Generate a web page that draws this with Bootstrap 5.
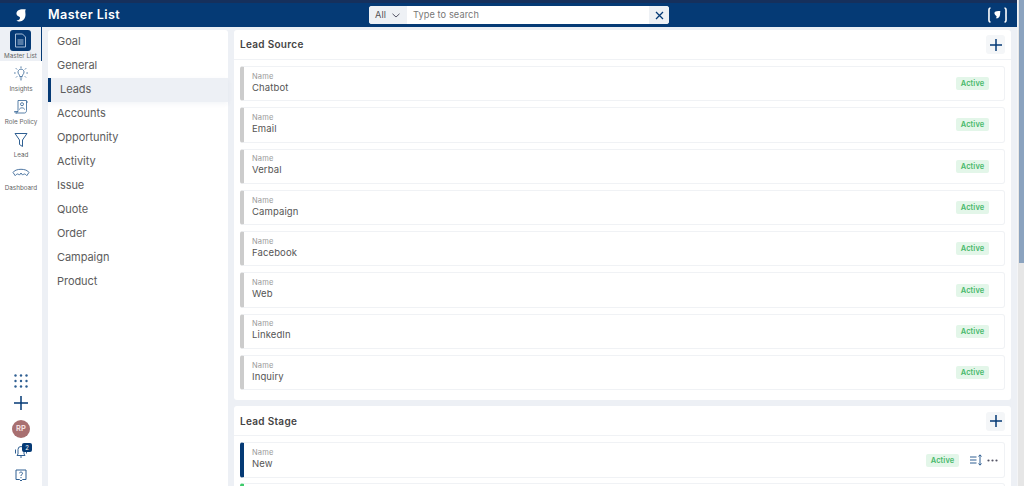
<!doctype html>
<html lang="en"><head><meta charset="utf-8"><title>Master List</title>
<link href="https://cdn.jsdelivr.net/npm/bootstrap@5.3.0/dist/css/bootstrap.min.css" rel="stylesheet">
<style>
html,body{height:486px;overflow:hidden}
body{background:#edf0f5;font-family:Inter,"Noto Sans",sans-serif;color:#444}
.page-col{width:1017px;flex:none;height:486px;overflow:hidden}
.topbar{height:27px;background:#053a75;border-top:3px solid #16305c;color:#fff}
.logo-cell{width:42px}
.page-title{width:327px;padding-left:6px;font-size:12.6px;font-weight:600;letter-spacing:.42px}
.search-box{width:300px;height:18px;background:#fff;border-radius:3px;overflow:hidden;font-size:9.2px;letter-spacing:.1px}
.search-all{width:38px;background:#eef1f5;color:#555;padding-left:6px;gap:6px}
.search-text{color:#777;padding-left:6px}
.search-x{width:20px;background:#eef1f5}
.brand-cell{margin-left:auto;margin-right:9px}
.main-area{height:459px}
.rail{width:42px;background:#fff;flex:none;font-size:6.3px;color:#666}
.rail-item{height:33px;padding-top:5px;gap:3px}
.rail-item span{line-height:8px;white-space:nowrap}
.rail-active{height:34px;background:#edf0f5;border-right:1px solid #053a75;padding-top:3px}
.rail-active span{line-height:8px}
.rail-tile{width:21px;height:21px;background:#053a75;border-radius:3px;margin-bottom:1px}
.rail-bottom{margin-top:auto;padding-bottom:4px}
.gap-dots{margin-bottom:8px}
.gap-plus{margin-bottom:10px}
.gap-avatar{margin-bottom:8px}
.gap-bell{margin-bottom:11px}
.avatar{width:18px;height:18px;border-radius:50%;background:#a86f70;color:#f3dede;font-size:7.5px;font-weight:700}
.count-badge{position:absolute;top:-3px;right:-4px;width:10px;height:9px;background:#053a75;color:#fff;border-radius:2px;font-size:6px;line-height:9px;text-align:center}
.menu-panel{width:180px;flex:none;margin:3px 6px 0;background:#fff;border-radius:3px 3px 0 0;font-size:11px;letter-spacing:-.05px;color:#5c5c5c}
.menu-entry{height:24px;padding-left:9px;padding-bottom:1px;display:flex;align-items:center}
.menu-current{background:#edf0f5;border-left:3px solid #053a75;padding-left:9px;box-shadow:0 2px 5px rgba(5,58,117,.05)}
.content-col{width:777px;flex:none;padding-top:3px}
.section-panel{background:#fff;border-radius:3px;margin-bottom:6px}
.section-head{height:30px;padding:0 6px;border-bottom:1px solid #f0f2f5;font-size:10px;font-weight:600;letter-spacing:.3px;color:#444}
.stage-head{padding-top:1px}
.plus-btn{width:19px;height:19px;background:#f4f6f8;border-radius:3px}
.section-body{padding:6px 6px 4px}
.row-card{height:35.3px;margin-bottom:6px;border:1px solid #f0f2f5;border-radius:3px;border-left:4px solid #ccc;padding:0 15px 0 8px}
.row-navy{border-left-color:#053a75;padding-right:6px;margin-bottom:5px}
.row-green{border-left-color:#3ecb6b}
.field-text{padding-bottom:2px}
.field-label{font-size:7.5px;color:#999;line-height:10px;letter-spacing:.2px}
.field-value{font-size:9.5px;color:#555;line-height:12px;letter-spacing:.12px}
.state-pill{width:33px;height:13px;background:#e3f6e9;border-radius:2px;color:#49b96c;font-size:7.5px;font-weight:600;line-height:13px;text-align:center;letter-spacing:.1px}
.row-tools{gap:5px;margin-left:11px}
.scrollbar-col{width:7px;flex:none;background:#e6e6e6;padding-left:1px;border-left:1px solid #f4f5f7}
.scrollbar-thumb{width:5px;height:263px;background:#8ba3bf}
</style></head>
<body class="d-flex">
<div class="page-col">
<nav class="topbar d-flex align-items-center">
  <div class="logo-cell d-flex justify-content-center">
    <svg width="12" height="13" viewBox="0 0 12 13"><path fill="#fff" d="M3 1.500C5 .3 8 0 11 .6 9.700 1.400 10.500 3 10.500 5.500 10.500 9.500 8 12.500 4.500 12.500 3.300 12.500 2.200 12.200 1.500 11.500 3.500 11.500 5 10.500 5 8.700 5 7.500 3 7.500 2 6.300.9 4.800 1.500 2.700 3 1.500Z"/></svg>
  </div>
  <div class="page-title">Master List</div>
  <div class="search-box d-flex align-items-stretch">
    <div class="search-all d-flex align-items-center">All
      <svg width="8" height="5" viewBox="0 0 8 5"><path d="M.5.8 4 4 7.500.8" fill="none" stroke="#556" stroke-width="1"/></svg>
    </div>
    <div class="search-text flex-grow-1 d-flex align-items-center">Type to search</div>
    <div class="search-x d-flex align-items-center justify-content-center">
      <svg width="9" height="9" viewBox="0 0 9 9"><path d="M1 1 8 8M8 1 1 8" stroke="#053a75" stroke-width="1.300"/></svg>
    </div>
  </div>
  <div class="brand-cell d-flex align-items-center">
    <svg width="21" height="16" viewBox="0 0 21 16"><path d="M3.500 1C1.500 1 2 3 2 8S1.500 15 3.500 15M17.500 1C19.500 1 19 3 19 8S19.500 15 17.500 15" fill="none" stroke="#fff" stroke-width="1.600"/><path fill="#fff" d="M8 4.800C9.500 4 11.500 3.800 13.500 4.200 13 5.200 13.200 6.500 13 8 12.600 10.500 11 11.500 8.800 11.300 9.800 10.500 10 9.500 9 8.800 7.500 7.800 6.800 6 8 4.800Z"/></svg>
  </div>
</nav>
<div class="main-area d-flex">
  <aside class="rail d-flex flex-column">
    <div class="rail-active d-flex flex-column align-items-center">
      <div class="rail-tile d-flex align-items-center justify-content-center">
        <svg width="13" height="15" viewBox="0 0 13 15" fill="none" stroke="#b9cce2" stroke-width=".9"><path d="M1.500 1h7l3 3v10h-10z"/><path d="M3.500 7h6M3.500 9h6M3.500 11h6"/></svg>
      </div>
      <span>Master List</span>
    </div>
    <div class="rail-item d-flex flex-column align-items-center">
      <svg width="16" height="16" viewBox="0 0 16 16" fill="none" stroke="#2f5f92" stroke-width=".8"><path d="M5.200 7.200a3 3 0 1 1 5.600 0c-.4.9-1.300 1.500-1.500 3.300H6.700c-.2-1.800-1.100-2.400-1.500-3.300zM6.800 12h2.400M7.200 13.800h1.600M8 .4v1.700M2.800 2.200 4.100 3.500M13.200 2.200 11.900 3.500M1 7h1.700M13.300 7H15M3 11.500l1.200-1.200M13 11.500l-1.200-1.200"/></svg>
      <span>Insights</span>
    </div>
    <div class="rail-item d-flex flex-column align-items-center">
      <svg width="16" height="16" viewBox="0 0 16 16" fill="none" stroke="#2f5f92" stroke-width=".8"><path d="M5 1.500h8.500v10c0 1.500-1 2.500-2 2.500H3c1 0 2-1 2-2.500zM3 14c-1 0-1.500-.7-1.500-1.500h3.500M13.500 3H15"/><circle cx="9" cy="5.200" r="1.500"/><path d="M6.500 10.500c0-2.200 5-2.200 5 0"/></svg>
      <span>Role Policy</span>
    </div>
    <div class="rail-item d-flex flex-column align-items-center">
      <svg width="14" height="16" viewBox="0 0 14 15" fill="none" stroke="#2f5f92" stroke-width="1"><path d="M1 1h12L8.500 7.500v6.500l-3-2V7.500z"/></svg>
      <span>Lead</span>
    </div>
    <div class="rail-item d-flex flex-column align-items-center">
      <svg width="18" height="16" viewBox="0 0 17 14" fill="none" stroke="#2f5f92" stroke-width=".8"><path d="M1 6.500C3 2.500 14 2.500 16 6.500L14 9.500C12.500 7.500 11 7.500 10 9L8.500 7 7 9C6 7.500 4.500 7.500 3 9.500Z"/></svg>
      <span>Dashboard</span>
    </div>
    <div class="rail-bottom d-flex flex-column align-items-center">
      <svg width="14" height="14" viewBox="0 0 14 14" fill="#2f5f92" class="gap-dots"><circle cx="1.500" cy="1.500" r="1.200"/><circle cx="7" cy="1.500" r="1.200"/><circle cx="12.500" cy="1.500" r="1.200"/><circle cx="1.500" cy="7" r="1.200"/><circle cx="7" cy="7" r="1.200"/><circle cx="12.500" cy="7" r="1.200"/><circle cx="1.500" cy="12.500" r="1.200"/><circle cx="7" cy="12.500" r="1.200"/><circle cx="12.500" cy="12.500" r="1.200"/></svg>
      <svg width="14" height="14" viewBox="0 0 14 14" class="gap-plus"><path d="M7 0v14M0 7h14" stroke="#053a75" stroke-width="1.500"/></svg>
      <div class="avatar d-flex align-items-center justify-content-center gap-avatar">RP</div>
      <div class="position-relative gap-bell" style="width:14px;height:12px">
        <svg width="14" height="12" viewBox="0 0 14 12" fill="none" stroke="#2f5f92" stroke-width="1"><path d="M4 3.500a3 3 0 0 1 6 0V8l1 1.500H3L4 8zM1.500 3.500v4M12.500 3.500v4M6 11h2"/></svg>
        <span class="count-badge">2</span>
      </div>
      <svg width="12" height="13" viewBox="0 0 12 13" fill="none" stroke="#2f5f92" stroke-width="1"><path d="M1 1h10v9.500H7.500L6 12l-1.500-1.500H1z"/><path d="M4.500 4.200C4.500 2.700 7.500 2.700 7.500 4.300 7.500 5.500 6 5.500 6 7M6 8v1.200"/></svg>
    </div>
  </aside>
  <div class="menu-panel">
    <div class="menu-entry">Goal</div>
    <div class="menu-entry">General</div>
    <div class="menu-entry menu-current">Leads</div>
    <div class="menu-entry">Accounts</div>
    <div class="menu-entry">Opportunity</div>
    <div class="menu-entry">Activity</div>
    <div class="menu-entry">Issue</div>
    <div class="menu-entry">Quote</div>
    <div class="menu-entry">Order</div>
    <div class="menu-entry">Campaign</div>
    <div class="menu-entry">Product</div>
  </div>
  <div class="content-col">
    <section class="section-panel">
      <div class="section-head d-flex align-items-center justify-content-between">Lead Source
        <div class="plus-btn d-flex align-items-center justify-content-center"><svg width="12" height="12" viewBox="0 0 12 12"><path d="M6 0v12M0 6h12" stroke="#053a75" stroke-width="1.500"/></svg></div>
      </div>
      <div class="section-body">
        <div class="row-card d-flex align-items-center justify-content-between"><div class="field-text"><div class="field-label">Name</div><div class="field-value">Chatbot</div></div><div class="state-pill">Active</div></div>
        <div class="row-card d-flex align-items-center justify-content-between"><div class="field-text"><div class="field-label">Name</div><div class="field-value">Email</div></div><div class="state-pill">Active</div></div>
        <div class="row-card d-flex align-items-center justify-content-between"><div class="field-text"><div class="field-label">Name</div><div class="field-value">Verbal</div></div><div class="state-pill">Active</div></div>
        <div class="row-card d-flex align-items-center justify-content-between"><div class="field-text"><div class="field-label">Name</div><div class="field-value">Campaign</div></div><div class="state-pill">Active</div></div>
        <div class="row-card d-flex align-items-center justify-content-between"><div class="field-text"><div class="field-label">Name</div><div class="field-value">Facebook</div></div><div class="state-pill">Active</div></div>
        <div class="row-card d-flex align-items-center justify-content-between"><div class="field-text"><div class="field-label">Name</div><div class="field-value">Web</div></div><div class="state-pill">Active</div></div>
        <div class="row-card d-flex align-items-center justify-content-between"><div class="field-text"><div class="field-label">Name</div><div class="field-value">LinkedIn</div></div><div class="state-pill">Active</div></div>
        <div class="row-card d-flex align-items-center justify-content-between"><div class="field-text"><div class="field-label">Name</div><div class="field-value">Inquiry</div></div><div class="state-pill">Active</div></div>
      </div>
    </section>
    <section class="section-panel">
      <div class="section-head stage-head d-flex align-items-center justify-content-between">Lead Stage
        <div class="plus-btn d-flex align-items-center justify-content-center"><svg width="12" height="12" viewBox="0 0 12 12"><path d="M6 0v12M0 6h12" stroke="#053a75" stroke-width="1.500"/></svg></div>
      </div>
      <div class="section-body">
        <div class="row-card row-navy d-flex align-items-center"><div class="me-auto field-text"><div class="field-label">Name</div><div class="field-value">New</div></div><div class="state-pill">Active</div>
          <div class="row-tools d-flex align-items-center">
            <svg width="12" height="12" viewBox="0 0 12 12" fill="none" stroke="#2f5f92" stroke-width="1"><path d="M0 3h6.500M0 6h6.500M0 9h6.500M10 1v10"/><path d="M8.500 2.500 10 .8l1.500 1.700M8.500 9.500 10 11.200l1.500-1.700"/></svg>
            <svg width="11" height="3" viewBox="0 0 11 3" fill="#556"><circle cx="1.500" cy="1.500" r="1.100"/><circle cx="5.500" cy="1.500" r="1.100"/><circle cx="9.500" cy="1.500" r="1.100"/></svg>
          </div>
        </div>
        <div class="row-card row-green"></div>
      </div>
    </section>
  </div>
</div>
</div>
<div class="scrollbar-col"><div class="scrollbar-thumb"></div></div>
<script src="https://cdn.jsdelivr.net/npm/bootstrap@5.3.0/dist/js/bootstrap.bundle.min.js"></script>
</body></html>
